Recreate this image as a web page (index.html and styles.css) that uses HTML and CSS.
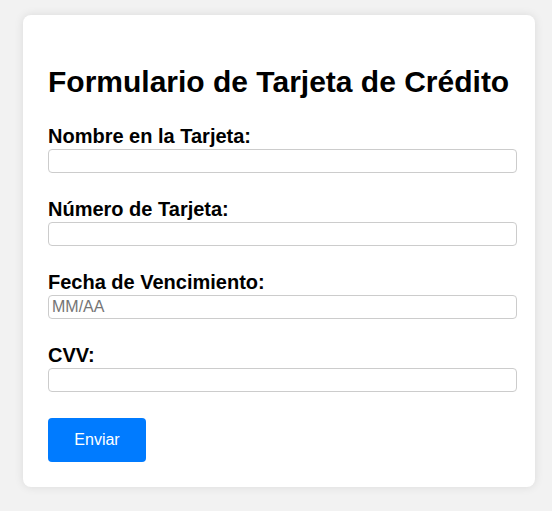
FILE: index.html
```html
<!DOCTYPE html>
<html lang="es">
<head>
<meta charset="utf-8">
<title>Formulario de Tarjeta de Crédito</title>
<link rel="stylesheet" href="styles.css">
</head>
<body>
<div class="card">
  <h1 class="title">Formulario de Tarjeta de Crédito</h1>
  <form class="form">
    <div class="field">
      <label class="label" for="nombre">Nombre en la Tarjeta:</label>
      <input class="input" id="nombre" type="text">
    </div>
    <div class="field">
      <label class="label" for="numero">Número de Tarjeta:</label>
      <input class="input" id="numero" type="text">
    </div>
    <div class="field">
      <label class="label" for="fecha">Fecha de Vencimiento:</label>
      <input class="input" id="fecha" type="text" placeholder="MM/AA">
    </div>
    <div class="field">
      <label class="label" for="cvv">CVV:</label>
      <input class="input" id="cvv" type="text">
    </div>
    <button class="button" type="submit">Enviar</button>
  </form>
</div>
</body>
</html>
```
FILE: styles.css
```css
html, body {
  margin: 0;
  padding: 0;
}
body {
  background: #f2f2f2;
  font-family: "Liberation Sans", Arial, sans-serif;
  color: #000;
  padding: 15px 17px 23px 23px;
}
.card {
  width: 512px;
  box-sizing: border-box;
  background: #fff;
  border-radius: 8px;
  box-shadow: 0 0 10px rgba(0, 0, 0, 0.1);
  padding: 25px 18px 25px 25px;
}
.title {
  font-size: 30px;
  font-weight: bold;
  margin: 25px 0 26px;
  line-height: 34px;
  white-space: nowrap;
}
.form {
  display: flex;
  flex-direction: column;
  align-items: flex-start;
}
.field {
  display: flex;
  flex-direction: column;
  width: 100%;
  margin-bottom: 25px;
}
.label {
  font-size: 20px;
  font-weight: bold;
  line-height: 23px;
  margin-bottom: 1px;
}
.input {
  box-sizing: border-box;
  width: 100%;
  height: 24px;
  border: 1px solid #ccc;
  border-radius: 4px;
  padding: 2px 3px;
  font-family: "Liberation Sans", Arial, sans-serif;
  font-size: 16px;
  background: #fff;
}
.input::placeholder {
  color: #757575;
}
.button {
  margin-top: 1px;
  box-sizing: border-box;
  width: 98px;
  height: 44px;
  background: #007bff;
  color: #fff;
  border: none;
  border-radius: 4px;
  font-family: "Liberation Sans", Arial, sans-serif;
  font-size: 16px;
}
```
